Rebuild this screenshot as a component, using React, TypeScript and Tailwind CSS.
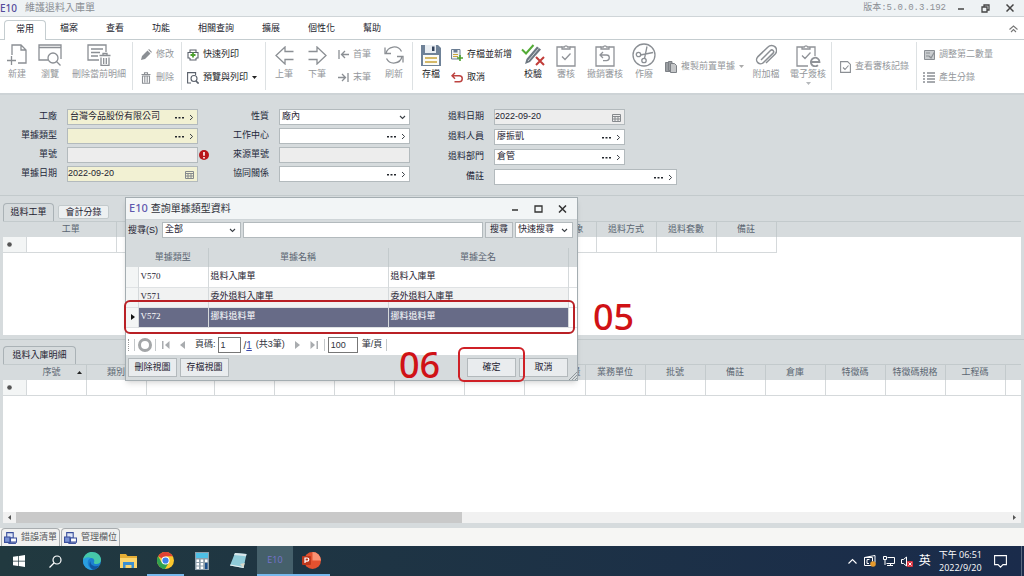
import React from 'react';

const FONT = "font-['Liberation_Sans','Noto_Sans_CJK_TC',sans-serif]";

interface IconProps {
  w: number;
  h: number;
  children: React.ReactNode;
  stroke?: string;
  sw?: number;
}

const Icon: React.FC<IconProps> = ({ w, h, children, stroke = '#8b8f94', sw = 1.3 }) => (
  <svg width={w} height={h} viewBox={`0 0 ${w} ${h}`} fill="none" stroke={stroke} strokeWidth={sw} className="shrink-0" aria-hidden="true">
    {children}
  </svg>
);

const Chevron = () => <Icon w={5} h={7} stroke="#3b4046" sw={1}><path d="M1 1l2.6 2.5L1 6" /></Icon>;

const Down = () => <Icon w={7} h={5} stroke="#3b4046" sw={1.1}><path d="M1 1l2.5 2.5L6 1" /></Icon>;

const Dots = () => (
  <svg width="9" height="3" viewBox="0 0 9 3" fill="#22262c" aria-hidden="true">
    <rect x="0" y="1" width="2" height="1.5" /><rect x="3.5" y="1" width="2" height="1.5" /><rect x="7" y="1" width="2" height="1.5" />
  </svg>
);

const Trash = () => (
  <Icon w={10} h={12} sw={1.1}><path d="M.5 2.5h9M3.5 2V.7h3V2M1.5 4h7v7.3h-7zM3.8 4.500v6M6.200 4.500v6" /></Icon>
);

interface BigButtonProps {
  label: string;
  className: string;
  enabled?: boolean;
  arrow?: boolean;
  children: React.ReactNode;
}

const BigButton: React.FC<BigButtonProps> = ({ label, className, enabled, arrow, children }) => (
  <button className={`flex shrink-0 flex-col items-center pt-1 ${enabled ? 'text-[#1b1d28]' : 'text-[#94979b]'} ${className}`}>
    <span className="flex h-[22px] items-center">{children}</span>
    <span className="whitespace-nowrap leading-4">{label}</span>
    {arrow && <svg width="5" height="3" viewBox="0 0 5 3" fill="#b5b8bb"><path d="M0 0h5L2.500 3z" /></svg>}
  </button>
);

interface SmallButtonProps {
  label: string;
  enabled?: boolean;
  arrow?: boolean;
  children: React.ReactNode;
}

const SmallButton: React.FC<SmallButtonProps> = ({ label, enabled, arrow, children }) => (
  <button className={`flex h-[23px] items-center gap-1 whitespace-nowrap ${enabled ? 'text-[#1b1d28]' : 'text-[#94979b]'}`}>
    <span className="flex w-3 justify-center">{children}</span>
    {label}
    {arrow && <svg width="5" height="3" viewBox="0 0 5 3" fill={enabled ? '#222' : '#aaa'}><path d="M0 0h5L2.500 3z" /></svg>}
  </button>
);

const Sep = () => <div className="mt-0.5 h-12 w-px shrink-0 bg-[#dde1e3]" />;

const Clipboard: React.FC<{ children: React.ReactNode }> = ({ children }) => (
  <Icon w={20} h={23} stroke="#909398">
    <path d="M6 3H1v19h18V3h-5" />
    <path d="M6 5V3h2.300a1.800 1.800 0 0 1 3.400 0H14v2z" />
    {children}
  </Icon>
);

const menus = ['檔案', '查看', '功能', '相關查詢', '擴展', '個性化', '幫助'];

const Ribbon = () => (
  <div className="flex h-[55px] shrink-0 overflow-hidden border-b-2 border-[#cdd3d6] bg-white">
    <BigButton label="新建" className="w-[34px]">
      <Icon w={20} h={22}><path d="M5 11V1h9l5 5v13h-8M14 1v5h5M4.500 12v9M0 16.500h9" /></Icon>
    </BigButton>
    <BigButton label="瀏覽" className="w-8">
      <Icon w={24} h={22}>
        <path d="M10 16H1V1h22v14M1 3.500h22" /><circle cx="15" cy="14" r="5" /><path d="M18.500 17.500l4 4" />
      </Icon>
    </BigButton>
    <BigButton label="刪除當前明細" className="w-[66px]">
      <Icon w={24} h={22}>
        <path d="M12 16H1V1h18v7M4 5h12M4 8.500h9M4 12h7" />
        <path d="M12.500 11.500h11M16 11V9.500h4V11M14 13.500v8h8v-8M16.700 14v6M19.300 14v6" />
      </Icon>
    </BigButton>
    <Sep />
    <div className="w-12 shrink-0 pt-[3px] pl-[7px]">
      <SmallButton label="修改">
        <svg width="11" height="11" viewBox="0 0 11 11" fill="#8b8f94"><path d="M0 11l1-4 5.500-5.500 3 3L4 10zM7.200.8L8 0l3 3-.8.8z" /></svg>
      </SmallButton>
      <SmallButton label="刪除"><Trash /></SmallButton>
    </div>
    <Sep />
    <div className="w-[83px] shrink-0 pt-[3px] pl-[5px]">
      <SmallButton label="快速列印" enabled>
        <Icon w={12} h={12} stroke="#5a616b" sw={1.1}>
          <path d="M3 3V1h6v2M3 9H1V3.500h10V9H9M3 9v2h6V9" /><path d="M6 3.500v5M3.500 6h5" stroke="#4da12f" strokeWidth="1.800" />
        </Icon>
      </SmallButton>
      <SmallButton label="預覽與列印" enabled arrow>
        <Icon w={12} h={12} stroke="#5a616b" sw={1.1}><path d="M4 11H.6V.6h8V3" /><circle cx="7" cy="6.500" r="3" /><path d="M9 9l2.600 2.600" strokeWidth="1.600" /></Icon>
      </SmallButton>
    </div>
    <Sep />
    <BigButton label="上筆" className="w-9">
      <Icon w={19} h={19}><path d="M18.500 5.500H10V1L1 9.500 10 18v-4.500h8.500" /></Icon>
    </BigButton>
    <BigButton label="下筆" className="w-[30px]">
      <Icon w={19} h={19}><path d="M.5 5.500H9V1l9 8.500L9 18v-4.500H.5" /></Icon>
    </BigButton>
    <div className="w-11 shrink-0 pt-[3px] pl-[5px]">
      <SmallButton label="首筆"><Icon w={11} h={9}><path d="M1 0v9M11 4.500H4M7 1L3.500 4.500 7 8" /></Icon></SmallButton>
      <SmallButton label="末筆"><Icon w={11} h={9}><path d="M10 0v9M0 4.500h7M4 1l3.500 3.500L4 8" /></Icon></SmallButton>
    </div>
    <BigButton label="刷新" className="w-9">
      <Icon w={20} h={20}>
        <path d="M2 8.500A8.300 8.300 0 0 1 17.500 6.500M18 11.500A8.300 8.300 0 0 1 2.500 13.500" />
        <path d="M1 2.500v6h6M19 17.500v-6h-6" />
      </Icon>
    </BigButton>
    <Sep />
    <BigButton label="存檔" className="w-9" enabled>
      <svg width="20" height="21" viewBox="0 0 20 21">
        <path d="M0 0h17l3 3v18H0z" fill="#6f8298" /><path d="M4 0h11v8H4z" fill="#e9eef3" /><path d="M11 1.500h2.500V6H11z" fill="#33435c" />
        <path d="M2 10h16v10H2z" fill="#fbfbf6" /><path d="M4 13h12M4 17h12" stroke="#c9a43a" strokeWidth="1.300" />
      </svg>
    </BigButton>
    <div className="w-[68px] shrink-0 pt-[3px] pl-0.5">
      <SmallButton label="存檔並新增" enabled>
        <svg width="12" height="12" viewBox="0 0 12 12">
          <path d="M.5.5h8.500v9.500H.5z" fill="#eef2f5" stroke="#6b7d93" /><path d="M2.500.5h4v3h-4z" fill="#6b7d93" /><path d="M2 5.500h5M2 7.500h5" stroke="#c9a43a" />
          <path d="M9 6v6M6 9h6" stroke="#4da12f" strokeWidth="1.600" />
        </svg>
      </SmallButton>
      <SmallButton label="取消" enabled>
        <Icon w={12} h={11} stroke="#bd4340" sw={1.500}><path d="M4 .8L1 3.800l3 3M1 3.800h7.300a2.900 2.900 0 0 1 0 5.900H3.500" /></Icon>
      </SmallButton>
    </div>
    <BigButton label="校驗" className="w-8" enabled>
      <svg width="24" height="22" viewBox="0 0 24 22" fill="none">
        <path d="M4 20l1.500-5L16 2.500l4 3L9 18z" fill="#6d7781" /><path d="M7 17L17.500 4.500" stroke="#cfd5da" strokeWidth="1" />
        <path d="M1 5.500l4 4L12.500 1" stroke="#53ab36" strokeWidth="2" /><path d="M15 13l8 8M23 13l-8 8" stroke="#c13c38" strokeWidth="2" />
      </svg>
    </BigButton>
    <BigButton label="審核" className="w-[34px]"><Clipboard><path d="M6 12.500l3 3 5.500-6" /></Clipboard></BigButton>
    <BigButton label="撤銷審核" className="w-11"><Clipboard><path d="M8 8l-3 3 3 3M5 11h6.500a2.800 2.800 0 0 1 0 5.600H8" /></Clipboard></BigButton>
    <BigButton label="作廢" className="w-[34px]">
      <Icon w={24} h={24}>
        <circle cx="12" cy="12" r="11" /><circle cx="6.500" cy="11.500" r="2.200" /><circle cx="12" cy="17.500" r="2.200" /><path d="M8.500 12L21 9.500M12.500 15.500L15 3.500" />
      </Icon>
    </BigButton>
    <div className="flex w-[86px] shrink-0 items-center pl-1">
      <SmallButton label="複製前置單據" arrow>
        <svg width="12" height="12" viewBox="0 0 12 12" fill="#9a9da1" stroke="#7d8186"><path d="M.5 1.500h5v9h-5z" /><path d="M3.500.5H7v9H3.500z" /><path d="M5.500 2.500h4l2 2v7h-6z" fill="#c4c6c8" /></svg>
      </SmallButton>
    </div>
    <BigButton label="附加檔" className="w-[38px]">
      <Icon w={22} h={22} sw={1.500}><path d="M6 16L15.500 6.500a1.800 1.800 0 0 1 2.600 2.600L8.500 18.500a4 4 0 0 1-5.800-5.600L13 3a5 5 0 0 1 7.200 7L11 19" /></Icon>
    </BigButton>
    <BigButton label="電子簽核" className="w-[46px]" arrow>
      <Icon w={25} h={23} stroke="#909398">
        <path d="M12 22H1V3h5M14 3h5v9M6 5V3h2.300a1.800 1.800 0 0 1 3.400 0H14v2zM6 11.500l3 3 5.500-6" />
        <path d="M15 18h8.500a4.300 4.300 0 1 0-1.500 3.300" strokeWidth="1.800" />
      </Icon>
    </BigButton>
    <Sep />
    <div className="flex w-[84px] shrink-0 items-center pl-[7px]">
      <SmallButton label="查看審核記錄"><Icon w={11} h={12} sw={1.1}><path d="M.6.6h7l2.800 2.800v8H.6zM3 6.500l2 2 3.500-4" /></Icon></SmallButton>
    </div>
    <Sep />
    <div className="shrink-0 pt-[3px] pl-1.5">
      <SmallButton label="調整第二數量">
        <svg width="11" height="11" viewBox="0 0 11 11" fill="none" stroke="#8b8f94"><path d="M.5 1.500h10v9H.5z" fill="#c9cccf" /><path d="M2 4h4M2 7h3M5 7l2 2 3.500-6" strokeWidth="1.200" /></svg>
      </SmallButton>
      <SmallButton label="產生分錄"><Icon w={12} h={11}><path d="M0 1h2M4 1h8M0 4h2M4 4h8M0 7h2M4 7h8M0 10h2M4 10h8" /></Icon></SmallButton>
    </div>
  </div>
);

type Kind = 'lookup' | 'plain' | 'date' | 'drop';

interface FieldProps {
  id: string;
  label: string;
  value?: string;
  kind: Kind;
  tone?: string;
  wide?: boolean;
  error?: boolean;
}

const Calendar = () => (
  <Icon w={9} h={9} stroke="#85898d" sw={1}><path d="M.5 1.500h8v7h-8zM.5 3.500h8M3 3v5M6 3v5M1 6h7" /></Icon>
);

const Field: React.FC<FieldProps> = ({ id, label, value = '', kind, tone = 'bg-white', wide, error }) => (
  <div className="flex h-4 items-center">
    <label htmlFor={id} className="w-[57px] shrink-0 text-right text-[#23283a]">{label}</label>
    <div className={`ml-2.5 flex h-4 shrink-0 items-center gap-[5px] border border-[#b3babd] pr-[3px] ${wide ? 'w-[183px]' : 'w-[131px]'} ${tone}`}>
      {kind === 'drop' ? (
        <select id={id} className="min-w-0 flex-1 appearance-none pl-0.5 outline-none"><option>{value}</option></select>
      ) : (
        <input id={id} defaultValue={value} className={`min-w-0 flex-1 outline-none ${kind === 'date' ? '' : 'pl-0.5'}`} />
      )}
      {kind === 'lookup' && <><button aria-label={`${label}…`}><Dots /></button><button aria-label={label}><Chevron /></button></>}
      {kind === 'date' && <Calendar />}
      {kind === 'drop' && <Down />}
    </div>
    {error && (
      <svg width="10" height="10" viewBox="0 0 10 10" className="ml-px shrink-0"><circle cx="5" cy="5" r="5" fill="#b8151b" /><path d="M5 2v3.800M5 7v1.500" stroke="#fff" strokeWidth="1.600" /></svg>
    )}
  </div>
);

const YELLOW = 'bg-[#f2f1d3]';
const GREY = 'bg-[#ededed]';

interface Column {
  name: string;
  w: number;
  align?: string;
  sort?: boolean;
}

const workColumns: Column[] = [
  { name: '工單', w: 90 }, { name: '', w: 60 }, { name: '', w: 60 }, { name: '', w: 60 }, { name: '', w: 60 }, { name: '', w: 60 },
  { name: '', w: 60 }, { name: '', w: 60 }, { name: '對象', w: 60, align: 'text-right pr-3' },
  { name: '退料方式', w: 60 }, { name: '退料套數', w: 60 }, { name: '備註', w: 60 },
];

const detailColumns: Column[] = [
  { name: '序號', w: 60, sort: true }, { name: '類別', w: 60 }, { name: '', w: 68 }, { name: '', w: 60 }, { name: '', w: 60 },
  { name: '', w: 60 }, { name: '', w: 70 }, { name: '', w: 60 }, { name: '數量', w: 61, align: 'text-right pr-1' },
  { name: '業務單位', w: 60 }, { name: '批號', w: 60 }, { name: '備註', w: 60 }, { name: '倉庫', w: 60 },
  { name: '特徵碼', w: 60 }, { name: '特徵碼規格', w: 60 }, { name: '工程碼', w: 60 },
];

const Grid: React.FC<{ columns: Column[]; fill?: boolean }> = ({ columns, fill }) => (
  <table className="w-full table-fixed border-collapse">
    <colgroup>
      <col className="w-[23px]" />
      {columns.map((c, i) => <col key={i} style={{ width: c.w }} />)}
      <col />
    </colgroup>
    <thead>
      <tr className="h-[15px] border-t border-[#c3cacc] bg-[#d6dbdd] text-[#5b6672]">
        <th />
        {columns.map((c, i) => (
          <th key={i} className={`border-r border-[#c3cacc] p-0 leading-[14px] font-normal whitespace-nowrap ${c.align || 'text-center'}`}>
            {c.sort ? (
              <span className="flex items-center justify-end gap-4 pr-1">{c.name}<svg width="5" height="3" viewBox="0 0 5 3" fill="#222"><path d="M0 3h5L2.500 0z" /></svg></span>
            ) : c.name}
          </th>
        ))}
        <th />
      </tr>
    </thead>
    <tbody>
      <tr className="h-4">
        <td className="border-r border-b border-[#d5d9db] bg-[#f3f5f5] p-0 pl-1"><svg width="5" height="5" viewBox="0 0 5 5"><circle cx="2.500" cy="2.500" r="2.300" fill="#555" /></svg></td>
        {columns.map((_, i) => <td key={i} className="border-r border-b border-[#d5d9db] p-0" />)}
        <td className={fill ? 'border-b border-[#d5d9db] p-0' : 'p-0'} />
      </tr>
    </tbody>
  </table>
);

const rows = [
  ['V570', '退料入庫單', '退料入庫單'],
  ['V571', '委外退料入庫單', '委外退料入庫單'],
  ['V572', '挪料退料單', '挪料退料單'],
];

const dialogButton = 'h-[19px] w-[49px] border border-[#b3b9bc] bg-[#e9ecee] text-[#1d2130]';

const Dialog = () => (
  <div role="dialog" aria-label="查詢單據類型資料" className="absolute top-[197px] left-[125px] flex w-[453px] flex-col border border-[#a4adb1] bg-[#d6dbdd] shadow-md">
    <div className="flex h-[22px] items-center border-b border-[#cfd5d8] bg-[#f2f5f6] pr-2.5 pl-[3px]">
      <span className="font-['Noto_Sans'] text-[11px] font-medium text-[#5f58ad]">E10</span>
      <h2 className="ml-[3px] text-[10px] text-[#30333c]">查詢單據類型資料</h2>
      <div className="ml-auto flex items-center gap-[15px]">
        <button aria-label="最小化"><Icon w={8} h={8} stroke="#333" sw={1.500}><path d="M1 5h6" /></Icon></button>
        <button aria-label="最大化"><Icon w={9} h={8} stroke="#333"><path d="M1 1h7v6H1z" /></Icon></button>
        <button aria-label="關閉"><Icon w={9} h={8} stroke="#333" sw={1.500}><path d="M1 .5l7 7M8 .5l-7 7" /></Icon></button>
      </div>
    </div>
    <div className="flex h-[28px] items-start gap-0.5 pt-0.5 pr-1 pl-0.5">
      <label htmlFor="scope" className="w-8 whitespace-nowrap leading-4">搜尋(S)</label>
      <div className="flex h-4 w-[79px] shrink-0 items-center border border-[#b3babd] bg-white pr-1">
        <select id="scope" className="min-w-0 flex-1 appearance-none pl-0.5 outline-none"><option>全部</option></select><Down />
      </div>
      <input aria-label="關鍵字" className="h-4 min-w-0 flex-1 border border-[#b3babd] bg-white outline-none" />
      <button className="h-4 w-7 border border-[#b3b9bc] bg-[#e4e7e9]">搜尋</button>
      <div className="flex h-4 w-[58px] shrink-0 items-center border border-[#b3babd] bg-white pr-1">
        <select aria-label="快速搜尋" className="min-w-0 flex-1 appearance-none pl-0.5 outline-none"><option>快速搜尋</option></select><Down />
      </div>
    </div>
    <div className="h-[87px] bg-white">
      <table className="w-full table-fixed border-collapse">
        <colgroup><col className="w-3" /><col className="w-[70px]" /><col className="w-[180px]" /><col className="w-[180px]" /><col /></colgroup>
        <thead>
          <tr className="h-[19px] bg-[#d6dbdd] text-[#5b6672]">
            <th />
            {['單據類型', '單據名稱', '單據全名'].map((h) => <th key={h} className="border-r border-[#c3cacc] p-0 font-normal">{h}</th>)}
            <th />
          </tr>
        </thead>
        <tbody>
          {rows.map((r, i) => (
            <tr key={r[0]} className={`h-5 border-b border-[#dfe2e4] ${i === 2 ? 'text-white' : i === 1 ? 'bg-[#f1f2f2]' : ''}`}>
              <td className="border-r border-[#d5d9db] bg-[#f3f5f5] p-0 pl-[5px]">
                {i === 2 && <svg width="4" height="6" viewBox="0 0 4 6"><path d="M0 0l4 3-4 3z" fill="#111" /></svg>}
              </td>
              {r.map((cell, j) => (
                <td key={j} className={`border-r border-[#d5d9db] p-0 pb-0.5 pl-0.5 leading-4 ${i === 2 ? 'bg-[#676b87]' : ''} ${j === 0 ? "font-['Liberation_Serif',serif]" : ''}`}>{cell}</td>
              ))}
              <td className="bg-white p-0" />
            </tr>
          ))}
        </tbody>
      </table>
    </div>
    <div className="flex h-5 items-center bg-white pl-0.5 text-[#30333c]">
      <div className="h-3 border-l border-dotted border-[#999]" />
      <div className="ml-[5px] h-3 w-px bg-[#c4c8ca]" />
      <div className="ml-[3px] size-[14px] rounded-full border-[3px] border-[#a3a6a8]" />
      <div className="ml-[3px] h-3 w-px bg-[#c4c8ca]" />
      <button aria-label="第一頁" className="ml-1.5"><svg width="8" height="8" viewBox="0 0 8 8" fill="#a9acaf"><path d="M0 0h1.500v8H0zM7.500 0v8L3 4z" /></svg></button>
      <button aria-label="上一頁" className="ml-2.5"><svg width="5" height="8" viewBox="0 0 5 8" fill="#a9acaf"><path d="M5 0v8L0 4z" /></svg></button>
      <label htmlFor="page" className="ml-2.5">頁碼:</label>
      <input id="page" defaultValue="1" className="ml-0.5 h-4 w-[23px] border border-[#777] bg-white pl-0.5 outline-none" />
      <span className="ml-[3px] text-[10px]">/<a href="#" className="text-[#3b49a8] underline">1</a></span>
      <span className="ml-1">(共3筆)</span>
      <button aria-label="下一頁" className="ml-2.5"><svg width="5" height="8" viewBox="0 0 5 8" fill="#a9acaf"><path d="M0 0v8l5-4z" /></svg></button>
      <button aria-label="最後頁" className="ml-2.5"><svg width="8" height="8" viewBox="0 0 8 8" fill="#a9acaf"><path d="M6.500 0H8v8H6.500zM.5 0v8L5 4z" /></svg></button>
      <div className="ml-1.5 h-3 w-px bg-[#c4c8ca]" />
      <input aria-label="每頁筆數" defaultValue="100" className="ml-[3px] h-4 w-[30px] border border-[#777] bg-white pl-0.5 outline-none" />
      <span className="ml-1">筆/頁</span>
      <div className="ml-1 h-3 w-px bg-[#c4c8ca]" />
    </div>
    <div className="flex h-[25px] items-center gap-[3px] pl-0.5">
      <button className={dialogButton}>刪除視圖</button>
      <button className={dialogButton}>存檔視圖</button>
      <button className={`ml-auto ${dialogButton}`}>確定</button>
      <button className={dialogButton}>取消</button>
      <div className="-ml-0.5 self-end"><Icon w={8} h={8} stroke="#8f979b" sw={1}><path d="M0 8l8-8M3 8l5-5M6 8l2-2" /></Icon></div>
    </div>
  </div>
);

const WindowsTab: React.FC<{ label: string }> = ({ label }) => (
  <button className="flex h-[18px] items-center gap-1 rounded-t border border-b-0 border-[#a9adb0] bg-[#f1f1f0] px-0.5 text-[#55585c]">
    <svg width="13" height="12" viewBox="0 0 12 11"><path d="M2.500.5h6v5h-6z" fill="#dfe6f7" stroke="#3a4f9c" /><path d="M.5 4.500h5v5h-5z" fill="#7b92d4" stroke="#3a4f9c" /><path d="M6 5.500h5.500v3.800H6z" fill="#fff" stroke="#3a4f9c" /><path d="M4 10.500h7" stroke="#3a4f9c" /></svg>
    {label}
  </button>
);

const taskItem = 'flex h-full w-[37px] shrink-0 items-center justify-center';

const Taskbar = () => (
  <div className="flex h-[30px] shrink-0 items-center bg-linear-to-r from-[#21393f] to-[#1a2b4b] text-white">
    <button aria-label="開始" className={taskItem}>
      <svg width="12" height="12" viewBox="0 0 12 12" fill="#fff"><path d="M0 1.700L5.300 1v4.700H0zM6 .9L12 0v5.700H6zM0 6.400h5.300V11L0 10.300zM6 6.400h6V12l-6-.9z" /></svg>
    </button>
    <button aria-label="搜尋" className="flex h-full w-9 shrink-0 items-center justify-center">
      <Icon w={13} h={13} stroke="#fff" sw={1.2}><circle cx="8" cy="5" r="4" /><path d="M5 8l-4.500 4.500" /></Icon>
    </button>
    <button aria-label="Edge" className={taskItem}>
      <svg width="18" height="18" viewBox="0 0 18 18">
        <circle cx="9" cy="9" r="9" fill="#1b7fd0" />
        <path d="M0 8C1 2.500 5 0 9 0c5 0 9 3.500 9 7.500 0 3-2 4.500-4.500 4.500-2 0-3.200-.8-2.500-1.800.7-1 .5-4-2.700-4.200C4.500 5.800 1.500 6.500 0 8z" fill="#46c8a8" />
        <path d="M0 8c1.500-2.500 5-3.600 8-2-2.500.8-3.500 3-3.200 5.500.4 3 2.700 5.500 5.700 6.300C4 18.500-.5 14 0 8z" fill="#2a9fe0" />
        <path d="M7.500 9c-.5 3.500 3 6.500 8.500 4.800-1.300 2-3 3.500-5.500 4C6.500 16.500 5.500 12 7.500 9z" fill="#11559f" />
      </svg>
    </button>
    <button aria-label="檔案總管" className={taskItem}>
      <svg width="17" height="14" viewBox="0 0 17 14"><path d="M0 0h6l1.500 2H17v12H0z" fill="#e5ae36" /><path d="M0 4h17v10H0z" fill="#fbd56d" /><path d="M3 8h11v6h-2.500v-3h-6v3H3z" fill="#3b8fd1" /></svg>
    </button>
    <button aria-label="Chrome" className={`${taskItem} border-b-2 border-[#76b9ed]`}>
      <svg width="17" height="17" viewBox="0 0 18 18">
        <circle cx="9" cy="9" r="9" fill="#fbc72d" />
        <path d="M9 9L1.200 4.500A9 9 0 0 1 16.800 4.500H9z" fill="#df4234" />
        <path d="M9 9l-1 9A9 9 0 0 1 1.200 4.500L5 11z" fill="#30a150" />
        <path d="M9 13l3.500-2L8.500 18A9 9 0 0 1 5 17z" fill="#30a150" />
        <circle cx="9" cy="9" r="4.300" fill="#fff" /><circle cx="9" cy="9" r="3.300" fill="#3d80ea" />
      </svg>
    </button>
    <button aria-label="小算盤" className="flex h-full w-9 shrink-0 items-center justify-center">
      <svg width="14" height="18" viewBox="0 0 14 18">
        <path d="M0 0h14v18H0z" fill="#8fa0ac" /><path d="M1 1h12v5H1z" fill="#4fc0e6" />
        <path d="M1.500 7.500h2.500V10H1.500zM5.700 7.500h2.500V10H5.700zM1.500 11h2.500v2.500H1.500zM5.700 11h2.500v2.500H5.700zM1.500 14.500h2.500V17H1.500zM5.700 14.500h2.500V17H5.700zM10 7.500h2.500V10H10z" fill="#fff" /><path d="M10 11h2.500v6H10z" fill="#1b4f8c" />
      </svg>
    </button>
    <button aria-label="記事本" className={taskItem}>
      <svg width="17" height="16" viewBox="0 0 17 16"><path d="M5 0l11.500 1-3 14L0 12.500z" fill="#8fcbd9" /><path d="M5 0l11.500 1-.5 2.200L4 2z" fill="#d9e6ea" /><path d="M13.500 15L10 11l4.800-1z" fill="#dcd8c8" /><path d="M0 12.500L13.500 15l.2-1L.5 11.500z" fill="#e9eff1" /></svg>
    </button>
    <button className="flex h-full w-9 shrink-0 items-center justify-center border-b-2 border-[#76b9ed] bg-[#45606b] font-['Open_Sans'] text-[9px] text-[#7673cf]">E10</button>
    <button aria-label="PowerPoint" className={`${taskItem} border-b-2 border-[#76b9ed]`}>
      <svg width="19" height="17" viewBox="0 0 19 17">
        <circle cx="10.500" cy="8.500" r="8.500" fill="#e3512f" /><path d="M10.500 0a8.500 8.500 0 0 1 8.500 8.500h-8.500z" fill="#fb9273" /><rect y="4" width="9" height="9" rx="1" fill="#bd371c" />
        <path d="M3 11V6h2.200a1.600 1.600 0 0 1 0 3.200H3" stroke="#fff" strokeWidth="1.200" fill="none" />
      </svg>
    </button>
    <div className="ml-auto flex items-center gap-1.5">
      <Icon w={9} h={6} stroke="#fff" sw={1.1}><path d="M.5 5.500l4-4 4 4" /></Icon>
      <svg width="14" height="12" viewBox="0 0 14 12" fill="none" stroke="#fff"><path d="M1.500 2.500L12 .5v7M8 10.500H1.500v-8h8v4" /><path d="M6.500 4.500H4v4h2" /><circle cx="10" cy="9" r="2.800" fill="#e69a2c" stroke="none" /></svg>
      <Icon w={12} h={11} stroke="#fff" sw={1}><path d="M4.500 1.500h7v6h-8M.5.5h3v3h-3zM2 4v5M4 9.500h6M7.500 8v1.500" /></Icon>
      <svg width="12" height="11" viewBox="0 0 12 11" fill="none" stroke="#fff"><path d="M.5 3.500h2L5.500 1v9L2.500 7.500h-2z" /><rect x="6" y="5" width="6" height="6" rx="1" fill="#d9323f" stroke="none" /><path d="M7.500 6.500l3 3M10.500 6.500l-3 3" /></svg>
      <span className="text-[12px] leading-4">英</span>
      <div className="mr-1.5 ml-0.5 text-center font-['Open_Sans','Noto_Sans_CJK_TC',sans-serif] text-[9px] leading-[13px]">
        <div>下午 06:51</div>
        <div>2022/9/20</div>
      </div>
      <button aria-label="通知" className="mr-1"><Icon w={13} h={13} stroke="#fff" sw={1.1}><path d="M.6.600h11.800v9H9l-2.500 2.600L4 9.600H.6z" /></Icon></button>
      <div className="ml-1 h-[30px] w-[3px] border-l border-[#5b6a80]" />
    </div>
  </div>
);

const App: React.FC = () => (
  <div className={`relative flex min-h-screen flex-col overflow-hidden bg-[#d6dbdd] text-[9px] text-[#1d2130] ${FONT}`}>
    <header className="flex h-[17px] shrink-0 items-center border-b border-[#cfd5d8] bg-[#eef2f4] pr-2.5 text-[#8b8f94]">
      <span className="font-['Noto_Sans'] text-[10px] leading-4 font-medium text-[#544a9b]">E10</span>
      <h1 className="ml-2 text-[10px] leading-4">維護退料入庫單</h1>
      <span className="ml-auto font-['Liberation_Mono','Noto_Sans_CJK_TC',monospace] leading-4">版本:5.0.0.3.192</span>
      <div className="ml-3 flex items-center gap-4">
        <button aria-label="最小化"><Icon w={7} h={8} stroke="#444" sw={1.500}><path d="M0 5h6" /></Icon></button>
        <button aria-label="還原"><Icon w={9} h={9} stroke="#444"><path d="M1 3h5v5H1zM3 3V1h5v5H6" /></Icon></button>
        <button aria-label="關閉"><Icon w={8} h={8} stroke="#444" sw={1.500}><path d="M.5.5l7 7M7.500.5l-7 7" /></Icon></button>
      </div>
    </header>

    <nav className="flex h-[23px] shrink-0 items-end border-b border-[#c5cdd0] bg-white pl-1 text-[#23252f]">
      <button className="-mb-px h-5 rounded-t-sm border border-b-0 border-[#c5cdd0] bg-white px-[11px] pb-0.5">常用</button>
      {menus.map((m) => <button key={m} className="h-5 px-3.5">{m}</button>)}
      <button aria-label="收合功能區" className="mr-1.5 mb-1.5 ml-auto"><Icon w={9} h={8} stroke="#777" sw={1.1}><path d="M.5 4.500l4-3.500 4 3.500M2 7l2.500-2.500L7 7" /></Icon></button>
    </nav>

    <Ribbon />

    <main className="flex flex-1 flex-col">
      <form className="flex h-[101px] shrink-0 border-b border-[#c3cacc] pt-[14px]" onSubmit={(e) => e.preventDefault()}>
        <div className="flex w-[212px] shrink-0 flex-col gap-[3px]">
          <Field id="plant" label="工廠" value="台灣今品股份有限公司" kind="lookup" tone={YELLOW} />
          <Field id="type" label="單據類型" kind="lookup" tone={YELLOW} />
          <Field id="no" label="單號" kind="plain" tone={GREY} error />
          <Field id="date" label="單據日期" value="2022-09-20" kind="date" tone={YELLOW} />
        </div>
        <div className="flex w-[215px] shrink-0 flex-col gap-[3px]">
          <Field id="nature" label="性質" value="廠內" kind="drop" />
          <Field id="center" label="工作中心" kind="lookup" />
          <Field id="source" label="來源單號" kind="plain" tone={GREY} />
          <Field id="relation" label="協同關係" kind="lookup" />
        </div>
        <div className="flex flex-col gap-1">
          <Field id="rdate" label="退料日期" value="2022-09-20" kind="date" tone={GREY} />
          <Field id="staff" label="退料人員" value="廖振凱" kind="lookup" />
          <Field id="dept" label="退料部門" value="倉管" kind="lookup" />
          <Field id="memo" label="備註" kind="lookup" wide />
        </div>
      </form>

      <section className="px-[3px]">
        <div className="flex h-[25px] items-end gap-1">
          <button className="h-[18px] w-[51px] rounded-t border border-b-0 border-[#aab2b6] bg-[#d6dbdd]">退料工單</button>
          <button className="mb-0.5 h-[14px] w-[51px] rounded-xs border border-[#c3cacc] bg-[#edf0f1] leading-3">會計分錄</button>
        </div>
        <div className="h-[114px] overflow-hidden bg-white"><Grid columns={workColumns} /></div>
      </section>

      <section className="mt-1 flex flex-1 flex-col border-t border-[#c3cacc] px-[3px]">
        <div className="flex h-6 items-end">
          <button className="h-[18px] w-[73px] rounded-t border border-b-0 border-[#aab2b6] bg-[#d6dbdd]">退料入庫明細</button>
        </div>
        <div className="flex-1 bg-white"><Grid columns={detailColumns} fill /></div>
        <div className="mb-[5px] flex h-[11px] items-center bg-[#f1f1f1]">
          <span className="flex w-[13px] justify-center"><svg width="3" height="5" viewBox="0 0 3 5" fill="#555"><path d="M3 0v5L0 2.500z" /></svg></span>
          <div className="flex h-full flex-1 items-center"><div className="h-full w-[45%] bg-[#c9c9c9]" /></div>
          <span className="flex w-[13px] justify-center"><svg width="3" height="5" viewBox="0 0 3 5" fill="#555"><path d="M0 0v5l3-2.500z" /></svg></span>
        </div>
      </section>
    </main>

    <div className="flex h-[18px] shrink-0 items-end gap-px bg-[#f6f6f4] pl-px">
      <WindowsTab label="錯誤清單" />
      <WindowsTab label="管理欄位" />
    </div>
    <Taskbar />

    <Dialog />

    <div className="absolute top-[300px] left-[124px] h-[34px] w-[451px] rounded-md border-2 border-[#b92025]" />
    <div className="absolute top-[347px] left-[458px] h-[35px] w-[67px] rounded-md border-2 border-[#cf2026]" />
    <span className="absolute top-[297px] left-[593px] font-['Noto_Sans','Open_Sans'] text-[36px] leading-10 font-medium text-[#d01216]">05</span>
    <span className="absolute top-[345px] left-[399px] font-['Noto_Sans','Open_Sans'] text-[36px] leading-10 font-medium text-[#d01216]">06</span>
  </div>
);

export default App;
